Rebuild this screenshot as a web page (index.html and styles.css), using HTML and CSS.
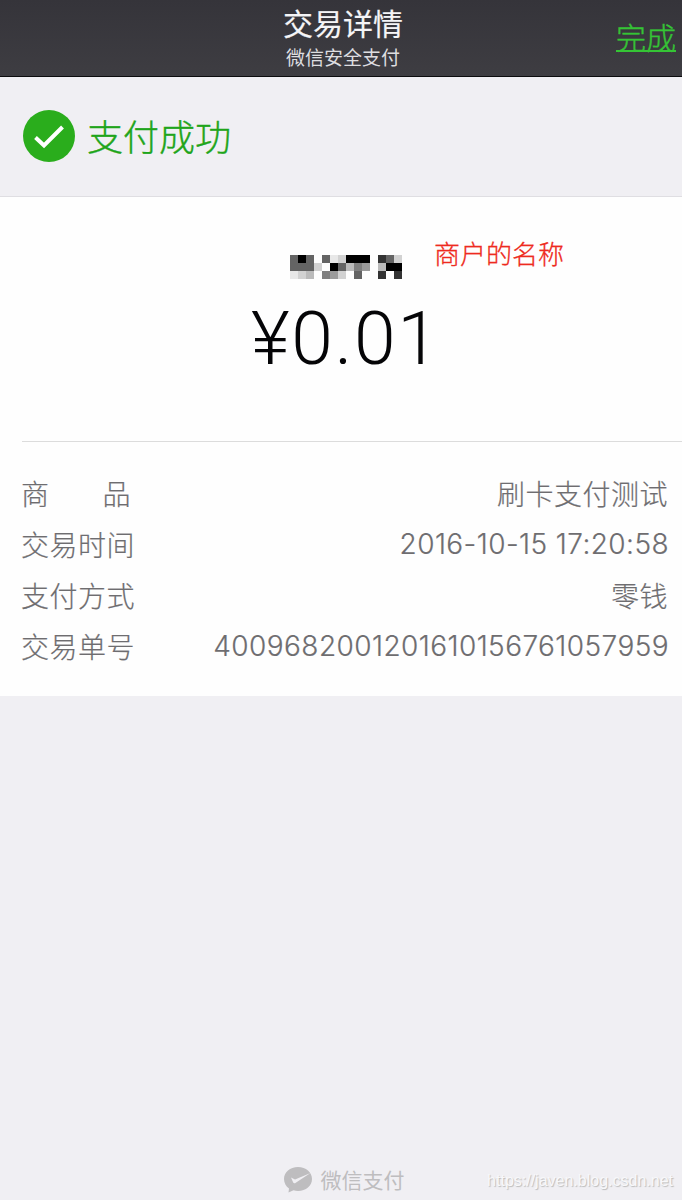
FILE: index.html
```html
<!DOCTYPE html>
<html lang="zh-CN">
<head>
    <meta charset="UTF-8">
    <meta name="viewport" content="width=device-width, initial-scale=1.0">
    <title>交易详情</title>
    <link rel="stylesheet" href="styles.css">
</head>
<body>
    <header class="navbar">
        <div class="nav-title">
            <h1>交易详情</h1>
            <p>微信安全支付</p>
        </div>
        <a class="done" href="#">完成</a>
    </header>

    <section class="status">
        <svg class="status-icon" viewBox="0 0 52 52">
            <circle cx="26" cy="26" r="26" fill="#2aad1c"/>
            <path d="M12.500 27.500 L21 35.500 L39.500 17" fill="none" stroke="#fff" stroke-width="4"/>
        </svg>
        <span>支付成功</span>
    </section>

    <main class="detail">
        <div class="summary">
            <div class="merchant">
                <!-- masked merchant name -->
                <svg class="mosaic" viewBox="0 0 14 3" preserveAspectRatio="none" shape-rendering="crispEdges">
                    <g fill="#000"><path d="M1 0h1v1h-1zM7 0h3v1h-3zM5 1h1v1h-1zM12 1h2v1h-2z"/></g>
                    <g fill="#333"><path d="M11 0h1v1h-1zM11 2h1v1h-1zM13 2h1v1h-1z"/></g>
                    <g fill="#646464"><path d="M0 0h1v1h-1zM2 0h1v1h-1zM4 0h1v1h-1zM12 0h1v1h-1zM0 1h3v1h-3zM6 1h1v1h-1zM8 2h1v1h-1z"/></g>
                    <g fill="#808080"><path d="M8 1h1v1h-1zM4 2h1v1h-1z"/></g>
                    <g fill="#9b9b9b"><path d="M9 1h1v1h-1zM5 2h1v1h-1z"/></g>
                    <g fill="#bbb"><path d="M7 1h1v1h-1zM11 1h1v1h-1zM2 2h1v1h-1z"/></g>
                    <g fill="#d2d2d2"><path d="M6 0h1v1h-1zM13 0h1v1h-1zM3 1h1v1h-1zM1 2h1v1h-1zM6 2h1v1h-1z"/></g>
                    <g fill="#e8e8e8"><path d="M5 0h1v1h-1zM0 2h1v1h-1z"/></g>
                </svg>
                <span class="note">商户的名称</span>
            </div>
            <div class="amount">¥0.01</div>
        </div>

        <dl class="info">
            <div class="row">
                <dt class="spread"><span>商</span><span>品</span></dt>
                <dd>刷卡支付测试</dd>
            </div>
            <div class="row">
                <dt>交易时间</dt>
                <dd class="time">2016-10-15 17:20:58</dd>
            </div>
            <div class="row">
                <dt>支付方式</dt>
                <dd>零钱</dd>
            </div>
            <div class="row">
                <dt>交易单号</dt>
                <dd class="number">4009682001201610156761057959</dd>
            </div>
        </dl>
    </main>

    <footer class="footer">
        <svg class="pay-icon" viewBox="0 0 28 26">
            <path d="M14 0C6 0 0 5.200 0 12C0 16 2 19.300 5 21.500L4.500 25.500L9.500 23.300C11 23.800 12.500 24 14 24C22 24 28 18.800 28 12C28 5.200 22 0 14 0Z" fill="#bebdbf"/>
            <path d="M7 10.500L11 12.500L26.500 6L11 16.200Q9.800 16.600 9.200 15.500Z" fill="#f0eff3"/>
        </svg>
        <span>微信支付</span>
    </footer>
    <div class="watermark">https://javen.blog.csdn.net</div>
</body>
</html>
```
FILE: styles.css
```css
*{
    box-sizing: border-box;
    margin: 0;
    padding: 0;
}
body{
    display: flex;
    flex-direction: column;
    height: 1200px;
    overflow: hidden;
    font-family: "Noto Sans CJK SC", sans-serif;
    background-color: #f0eff3;
}
.navbar{
    display: grid;
    grid-template-columns: 1fr auto 1fr;
    height: 77px;
    background: linear-gradient(#35343a, #3e3d42);
    border-bottom: 1px solid #0c0c0e;
}
.nav-title{
    grid-column: 2;
    padding: 3px 0 0 4px;
    text-align: center;
    color: #f5f5f7;
}
.nav-title h1{
    font-size: 30px;
    line-height: 38px;
    font-weight: 400;
    -webkit-text-stroke: 0.2px #f5f5f7;
}
.nav-title p{
    font-size: 19px;
    line-height: 32px;
    color: #dedee0;
}
.done{
    justify-self: end;
    padding: 15px 6px 0 0;
    font-size: 30px;
    line-height: 42px;
    font-weight: 300;
    color: #35c435;
    -webkit-text-stroke: 0.4px #35c435;
    text-underline-offset: 1px;
    text-decoration-thickness: 2px;
    text-decoration-skip-ink: none;
}
.status{
    display: flex;
    align-items: center;
    gap: 12px;
    height: 120px;
    padding: 0 0 2px 23px;
    border-bottom: 1px solid #dfdee2;
    font-size: 36px;
    font-weight: 300;
    color: #1fa51a;
    -webkit-text-stroke: 0.4px #1fa51a;
}
.status span{
    padding-bottom: 2px;
}
.status-icon{
    width: 52px;
    height: 52px;
}
.detail{
    height: 499px;
    background-color: #fefefe;
}
.summary{
    height: 245px;
    margin-left: 22px;
    padding-top: 37px;
    border-bottom: 1px solid #dcdcdc;
}
.merchant{
    display: flex;
    height: 60px;
    padding-left: 268px;
}
.mosaic{
    width: 112px;
    height: 24px;
    margin-top: 21px;
}
.note{
    margin-left: 32px;
    font-size: 26px;
    line-height: 38px;
    font-weight: 300;
    color: #ee2a20;
    -webkit-text-stroke: 0.3px #ee2a20;
}
.amount{
    padding-left: 229px;
    font-family: Roboto, "Liberation Sans", sans-serif;
    font-size: 75px;
    line-height: 88px;
    font-weight: 300;
    letter-spacing: 1.6px;
    color: #050507;
}
.info{
    padding: 26px 14px 0 21px;
    font-size: 28px;
    font-weight: 300;
    letter-spacing: 0.5px;
    color: #6e6d70;
    -webkit-text-stroke: 0.2px #6e6d70;
}
.row{
    display: flex;
    justify-content: space-between;
    height: 51px;
    line-height: 51px;
}
.spread{
    display: flex;
    justify-content: space-between;
    width: 110px;
}
.time,
.number{
    font-family: Inter, "Noto Sans CJK SC", sans-serif;
    font-weight: 300;
    font-size: 28px;
    letter-spacing: 0.43px;
    margin-right: -1px;
}
.footer{
    display: flex;
    justify-content: center;
    align-items: center;
    gap: 9px;
    margin-top: auto;
    padding-left: 6px;
    height: 41px;
    font-size: 21px;
    font-weight: 400;
    color: #bebdbf;
}
.footer span{
    padding-bottom: 2px;
}
.pay-icon{
    width: 28px;
    height: 26px;
}
.watermark{
    position: absolute;
    right: 9px;
    bottom: 8px;
    font: 16px/22px "Liberation Sans", sans-serif;
    color: #f8f8fa;
    text-shadow: 1px 1px 1px #bbb;
}
```
